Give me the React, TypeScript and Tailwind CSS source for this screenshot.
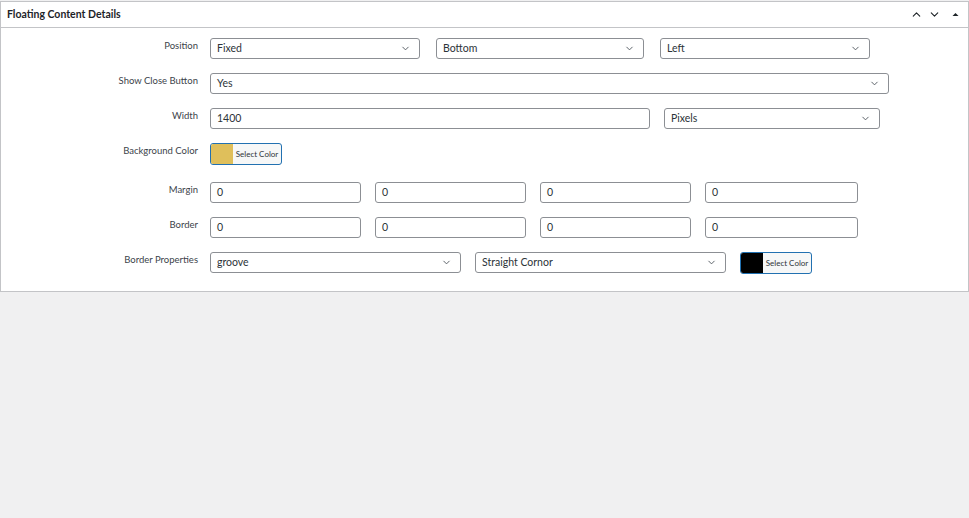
import { ChevronDown, ChevronUp } from "lucide-react";

const FONT = "font-['Lato','Open_Sans',sans-serif]";

function Select({ value, className }: { value: string; className: string }) {
  return (
    <div
      className={`flex h-[21px] items-center justify-between rounded-[3px] border border-[#8c8f94] bg-white pl-[6px] pr-[8px] text-[10.5px] text-[#2c3338] ${className}`}
    >
      <span>{value}</span>
      <ChevronDown size={11} strokeWidth={2} className="text-[#50575e]" />
    </div>
  );
}

function Input({ value, className }: { value: string; className: string }) {
  return (
    <div
      className={`flex h-[21px] items-center rounded-[3px] border border-[#8c8f94] bg-white pl-[6px] text-[10.5px] text-[#2c3338] ${className}`}
    >
      {value}
    </div>
  );
}

function ColorButton({ color }: { color: string }) {
  return (
    <div className="flex h-[22px] w-[72px] overflow-hidden rounded-[3px] border border-[#2271b1] bg-[#f6f7f7]">
      <div className="w-[22px]" style={{ background: color }} />
      <div className="flex flex-1 items-center justify-center text-[8px] text-[#2c3338]">
        Select Color
      </div>
    </div>
  );
}

function Row({ label, children, h = "h-[35px]" }: { label: string; children: React.ReactNode; h?: string }) {
  return (
    <div className={`flex ${h}`}>
      <div className="w-[209px] pr-[12px] pt-[1px] text-right text-[9.5px] text-[#3c434a]">{label}</div>
      <div className="flex items-start">{children}</div>
    </div>
  );
}

export default function App() {
  return (
    <div className={`h-[518px] w-[969px] bg-[#f0f0f1] pt-[1px] ${FONT}`}>
      <div className="border border-[#c3c4c7] bg-white">
        <div className="flex h-[26px] items-center justify-between border-b border-[#c3c4c7] pl-[6px] pr-[6px]">
          <span className="text-[10.5px] font-bold text-[#1d2327]">Floating Content Details</span>
          <div className="flex items-center gap-[5px] text-[#1d2327]">
            <ChevronUp size={13} strokeWidth={2} />
            <ChevronDown size={13} strokeWidth={2} />
            <svg width="13" height="13" viewBox="0 0 13 13" className="ml-[3px]">
              <path d="M3.5 8 L6.5 5 L9.5 8 Z" fill="#1d2327" />
            </svg>
          </div>
        </div>
        <div className="pb-[18px] pt-[10px]">
          <Row label="Position">
            <Select value="Fixed" className="w-[210px]" />
            <Select value="Bottom" className="ml-[16px] w-[208px]" />
            <Select value="Left" className="ml-[16px] w-[210px]" />
          </Row>
          <Row label="Show Close Button">
            <Select value="Yes" className="w-[679px]" />
          </Row>
          <Row label="Width">
            <Input value="1400" className="w-[440px]" />
            <Select value="Pixels" className="ml-[14px] w-[216px]" />
          </Row>
          <Row label="Background Color" h="h-[39px]">
            <ColorButton color="#dfbf5b" />
          </Row>
          <Row label="Margin">
            <Input value="0" className="w-[151px]" />
            <Input value="0" className="ml-[14px] w-[151px]" />
            <Input value="0" className="ml-[14px] w-[151px]" />
            <Input value="0" className="ml-[14px] w-[153px]" />
          </Row>
          <Row label="Border">
            <Input value="0" className="w-[151px]" />
            <Input value="0" className="ml-[14px] w-[151px]" />
            <Input value="0" className="ml-[14px] w-[151px]" />
            <Input value="0" className="ml-[14px] w-[153px]" />
          </Row>
          <Row label="Border Properties" h="h-[21px]">
            <Select value="groove" className="w-[251px]" />
            <Select value="Straight Cornor" className="ml-[14px] w-[251px]" />
            <div className="ml-[14px]">
              <ColorButton color="#000000" />
            </div>
          </Row>
        </div>
      </div>
    </div>
  );
}
